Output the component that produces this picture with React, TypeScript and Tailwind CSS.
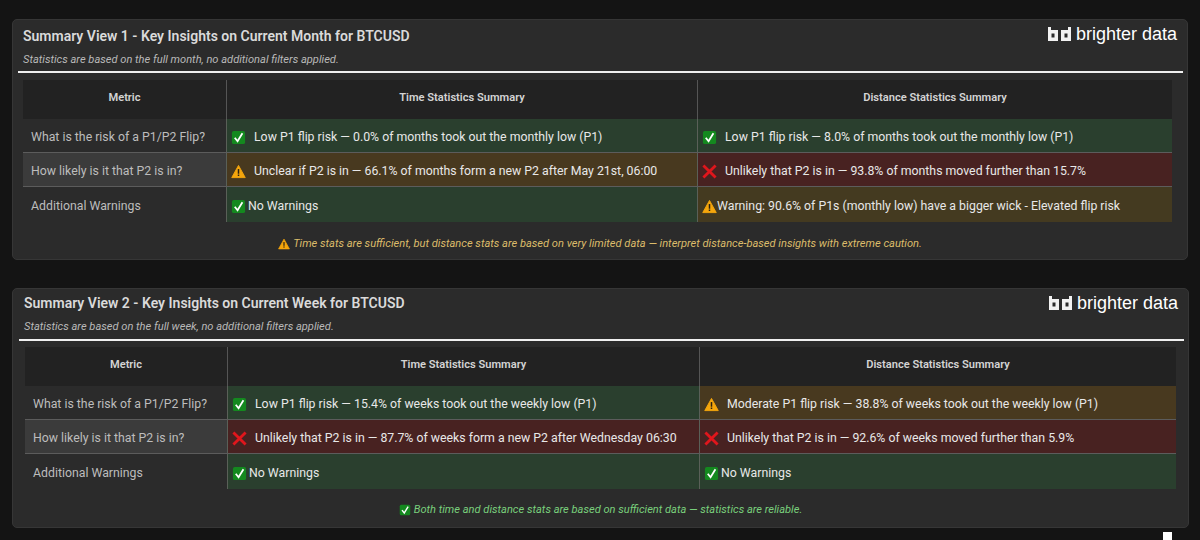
const font = { fontFamily: 'Roboto, "Open Sans", sans-serif' };

type Tone = "green" | "amber" | "red" | "warn";
type Icon = "check" | "warning" | "cross";

interface Cell {
  tone: Tone;
  icon: Icon;
  text: string;
  tight?: boolean;
}

interface Row {
  metric: string;
  time: Cell;
  distance: Cell;
}

const toneClass: Record<Tone, string> = {
  green: "bg-[#2a3f2e]",
  amber: "bg-[#48391f]",
  red: "bg-[#482221]",
  warn: "bg-[#443a20]",
};

const StatusIcon = ({ icon, size = 15 }: { icon: Icon; size?: number }) => {
  if (icon === "check") {
    return (
      <svg width={size} height={size} viewBox="0 0 16 16" className="shrink-0">
        <rect x="1" y="1" width="14" height="14" rx="2" fill="#14891f" />
        <path d="M4 8.2 L7 12 L12.2 3.4" fill="none" stroke="#ffffff" strokeWidth="1.9" />
      </svg>
    );
  }
  if (icon === "warning") {
    return (
      <svg width={size} height={size} viewBox="0 0 16 16" className="shrink-0">
        <path d="M8 1.5 L15.2 14.5 H0.8 Z" fill="#f5a60c" stroke="#f5a60c" strokeLinejoin="round" />
        <rect x="7.2" y="5.4" width="1.6" height="5" fill="#2b2010" />
        <rect x="7.2" y="11.2" width="1.6" height="1.6" fill="#2b2010" />
      </svg>
    );
  }
  return (
    <svg width={size} height={size} viewBox="0 0 16 16" className="shrink-0">
      <path d="M1.5 1.5 L14.5 14.5 M14.5 1.5 L1.5 14.5" fill="none" stroke="#e0161c" strokeWidth="3" />
    </svg>
  );
};

const BrandLogo = ({ className }: { className: string }) => (
  <div className={`flex items-center gap-[5px] h-[18px] text-white ${className}`}>
    <svg width="23" height="14" viewBox="0 0 23 14">
      <path fillRule="evenodd" d="M0 0 H3 V3 H10 V14 H0 Z M3.5 6.5 V10.5 H6.5 V6.5 Z" fill="#f2f2f2" />
      <path fillRule="evenodd" d="M20 0 H23 V14 H13 V3 H20 Z M16.5 6.5 V10.5 H19.5 V6.5 Z" fill="#f2f2f2" />
    </svg>
    <span className="text-[18px] leading-none" style={{ fontFamily: '"Liberation Sans", sans-serif' }}>
      brighter data
    </span>
  </div>
);

const StatusCell = ({ cell }: { cell: Cell }) => {
  let gap = "gap-[8px]";
  if (cell.tight) gap = cell.icon === "warning" ? "gap-0" : "gap-[2px]";
  return (
    <div
      className={`flex items-center pl-[4px] pt-[4px] text-[12.3px] text-[#e8e8e8] whitespace-nowrap border-l border-[#5a6058] ${toneClass[cell.tone]} ${gap}`}
    >
      <StatusIcon icon={cell.icon} />
      <span>{cell.text}</span>
    </div>
  );
};

interface SummaryProps {
  title: string;
  subtitle: string;
  rows: Row[];
  note: string;
  noteIcon: Icon;
  noteClass: string;
  wrapClass: string;
  ruleClass: string;
  tableClass: string;
  gridClass: string;
  headClass: string;
  logoClass: string;
}

const SummaryCard = (p: SummaryProps) => (
  <section className={`rounded-[5px] border border-[#363636] bg-[#2b2b2b] ${p.wrapClass}`}>
    <div className={`flex justify-between items-start ${p.headClass}`}>
      <div>
        <h2 className="text-[14px] leading-[18px] font-semibold text-[#dadada]">{p.title}</h2>
        <p className="mt-[8px] text-[11.1px] leading-[14px] italic text-[#b9b9b9]">{p.subtitle}</p>
      </div>
      <BrandLogo className={p.logoClass} />
    </div>
    <div className={`h-[2px] bg-[#f0f0f0] ${p.ruleClass}`} />
    <div className={p.tableClass}>
      <div className={`grid ${p.gridClass} h-[39px] bg-[#222222] text-[11.1px] font-semibold text-[#d4d4d4]`}>
        <div className="flex items-center justify-center pb-[3px]">Metric</div>
        <div className="flex items-center justify-center pb-[3px] border-l border-[#555555]">Time Statistics Summary</div>
        <div className="flex items-center justify-center pb-[3px] border-l border-[#555555]">Distance Statistics Summary</div>
      </div>
      {p.rows.map((row, i) => (
        <div
          key={row.metric}
          className={`grid ${p.gridClass} ${i === 1 ? "h-[35px] border-y border-[#5c5c5c]" : i === 0 ? "h-[33px]" : "h-[35px]"}`}
        >
          <div
            className={`flex items-center pl-[8px] pt-[4px] text-[12.3px] text-[#bdbdbd] ${
              i === 1 ? "bg-[#3b3b3b]" : "bg-[#2b2b2b]"
            }`}
          >
            {row.metric}
          </div>
          <StatusCell cell={row.time} />
          <StatusCell cell={row.distance} />
        </div>
      ))}
    </div>
    <div className={`flex items-center justify-center gap-[3px] text-[11.1px] italic ${p.noteClass}`}>
      <StatusIcon icon={p.noteIcon} size={12} />
      <span>{p.note}</span>
    </div>
  </section>
);

const monthRows: Row[] = [
  {
    metric: "What is the risk of a P1/P2 Flip?",
    time: { tone: "green", icon: "check", text: "Low P1 flip risk — 0.0% of months took out the monthly low (P1)" },
    distance: { tone: "green", icon: "check", text: "Low P1 flip risk — 8.0% of months took out the monthly low (P1)" },
  },
  {
    metric: "How likely is it that P2 is in?",
    time: { tone: "amber", icon: "warning", text: "Unclear if P2 is in — 66.1% of months form a new P2 after May 21st, 06:00" },
    distance: { tone: "red", icon: "cross", text: "Unlikely that P2 is in — 93.8% of months moved further than 15.7%" },
  },
  {
    metric: "Additional Warnings",
    time: { tone: "green", icon: "check", text: "No Warnings", tight: true },
    distance: {
      tone: "warn",
      icon: "warning",
      text: "Warning: 90.6% of P1s (monthly low) have a bigger wick - Elevated flip risk",
      tight: true,
    },
  },
];

const weekRows: Row[] = [
  {
    metric: "What is the risk of a P1/P2 Flip?",
    time: { tone: "green", icon: "check", text: "Low P1 flip risk — 15.4% of weeks took out the weekly low (P1)" },
    distance: { tone: "amber", icon: "warning", text: "Moderate P1 flip risk — 38.8% of weeks took out the weekly low (P1)" },
  },
  {
    metric: "How likely is it that P2 is in?",
    time: { tone: "red", icon: "cross", text: "Unlikely that P2 is in — 87.7% of weeks form a new P2 after Wednesday 06:30" },
    distance: { tone: "red", icon: "cross", text: "Unlikely that P2 is in — 92.6% of weeks moved further than 5.9%" },
  },
  {
    metric: "Additional Warnings",
    time: { tone: "green", icon: "check", text: "No Warnings", tight: true },
    distance: { tone: "green", icon: "check", text: "No Warnings", tight: true },
  },
];

export default function App() {
  return (
    <div className="w-[1200px] h-[540px] overflow-hidden bg-[#141414] pt-[19px]" style={font}>
      <SummaryCard
        title="Summary View 1 - Key Insights on Current Month for BTCUSD"
        subtitle="Statistics are based on the full month, no additional filters applied."
        rows={monthRows}
        note="Time stats are sufficient, but distance stats are based on very limited data — interpret distance-based insights with extreme caution."
        noteIcon="warning"
        noteClass="mt-[14px] text-[#dcbc6a]"
        wrapClass="ml-[12px] w-[1176px] h-[241px]"
        headClass="pl-[10px] pr-[10px] pt-[7px] h-[51px]"
        logoClass="-mt-[2px]"
        ruleClass="ml-[5px] w-[1165px]"
        tableClass="ml-[10px] mt-[7px] w-[1149px]"
        gridClass="grid-cols-[203px_471px_475px]"
      />
      <SummaryCard
        title="Summary View 2 - Key Insights on Current Week for BTCUSD"
        subtitle="Statistics are based on the full week, no additional filters applied."
        rows={weekRows}
        note="Both time and distance stats are based on sufficient data — statistics are reliable."
        noteIcon="check"
        noteClass="mt-[13px] text-[#79cf7c]"
        wrapClass="mt-[28px] ml-[12px] w-[1177px] h-[240px]"
        headClass="pl-[11px] pr-[10px] pt-[5px] h-[50px]"
        logoClass="mt-0"
        ruleClass="ml-[6px] w-[1165px]"
        tableClass="ml-[12px] mt-[6px] w-[1151px]"
        gridClass="grid-cols-[202px_472px_477px]"
      />
      <div className="ml-[1163px] mt-[4px] h-[8px] w-[9px] bg-white" />
    </div>
  );
}
